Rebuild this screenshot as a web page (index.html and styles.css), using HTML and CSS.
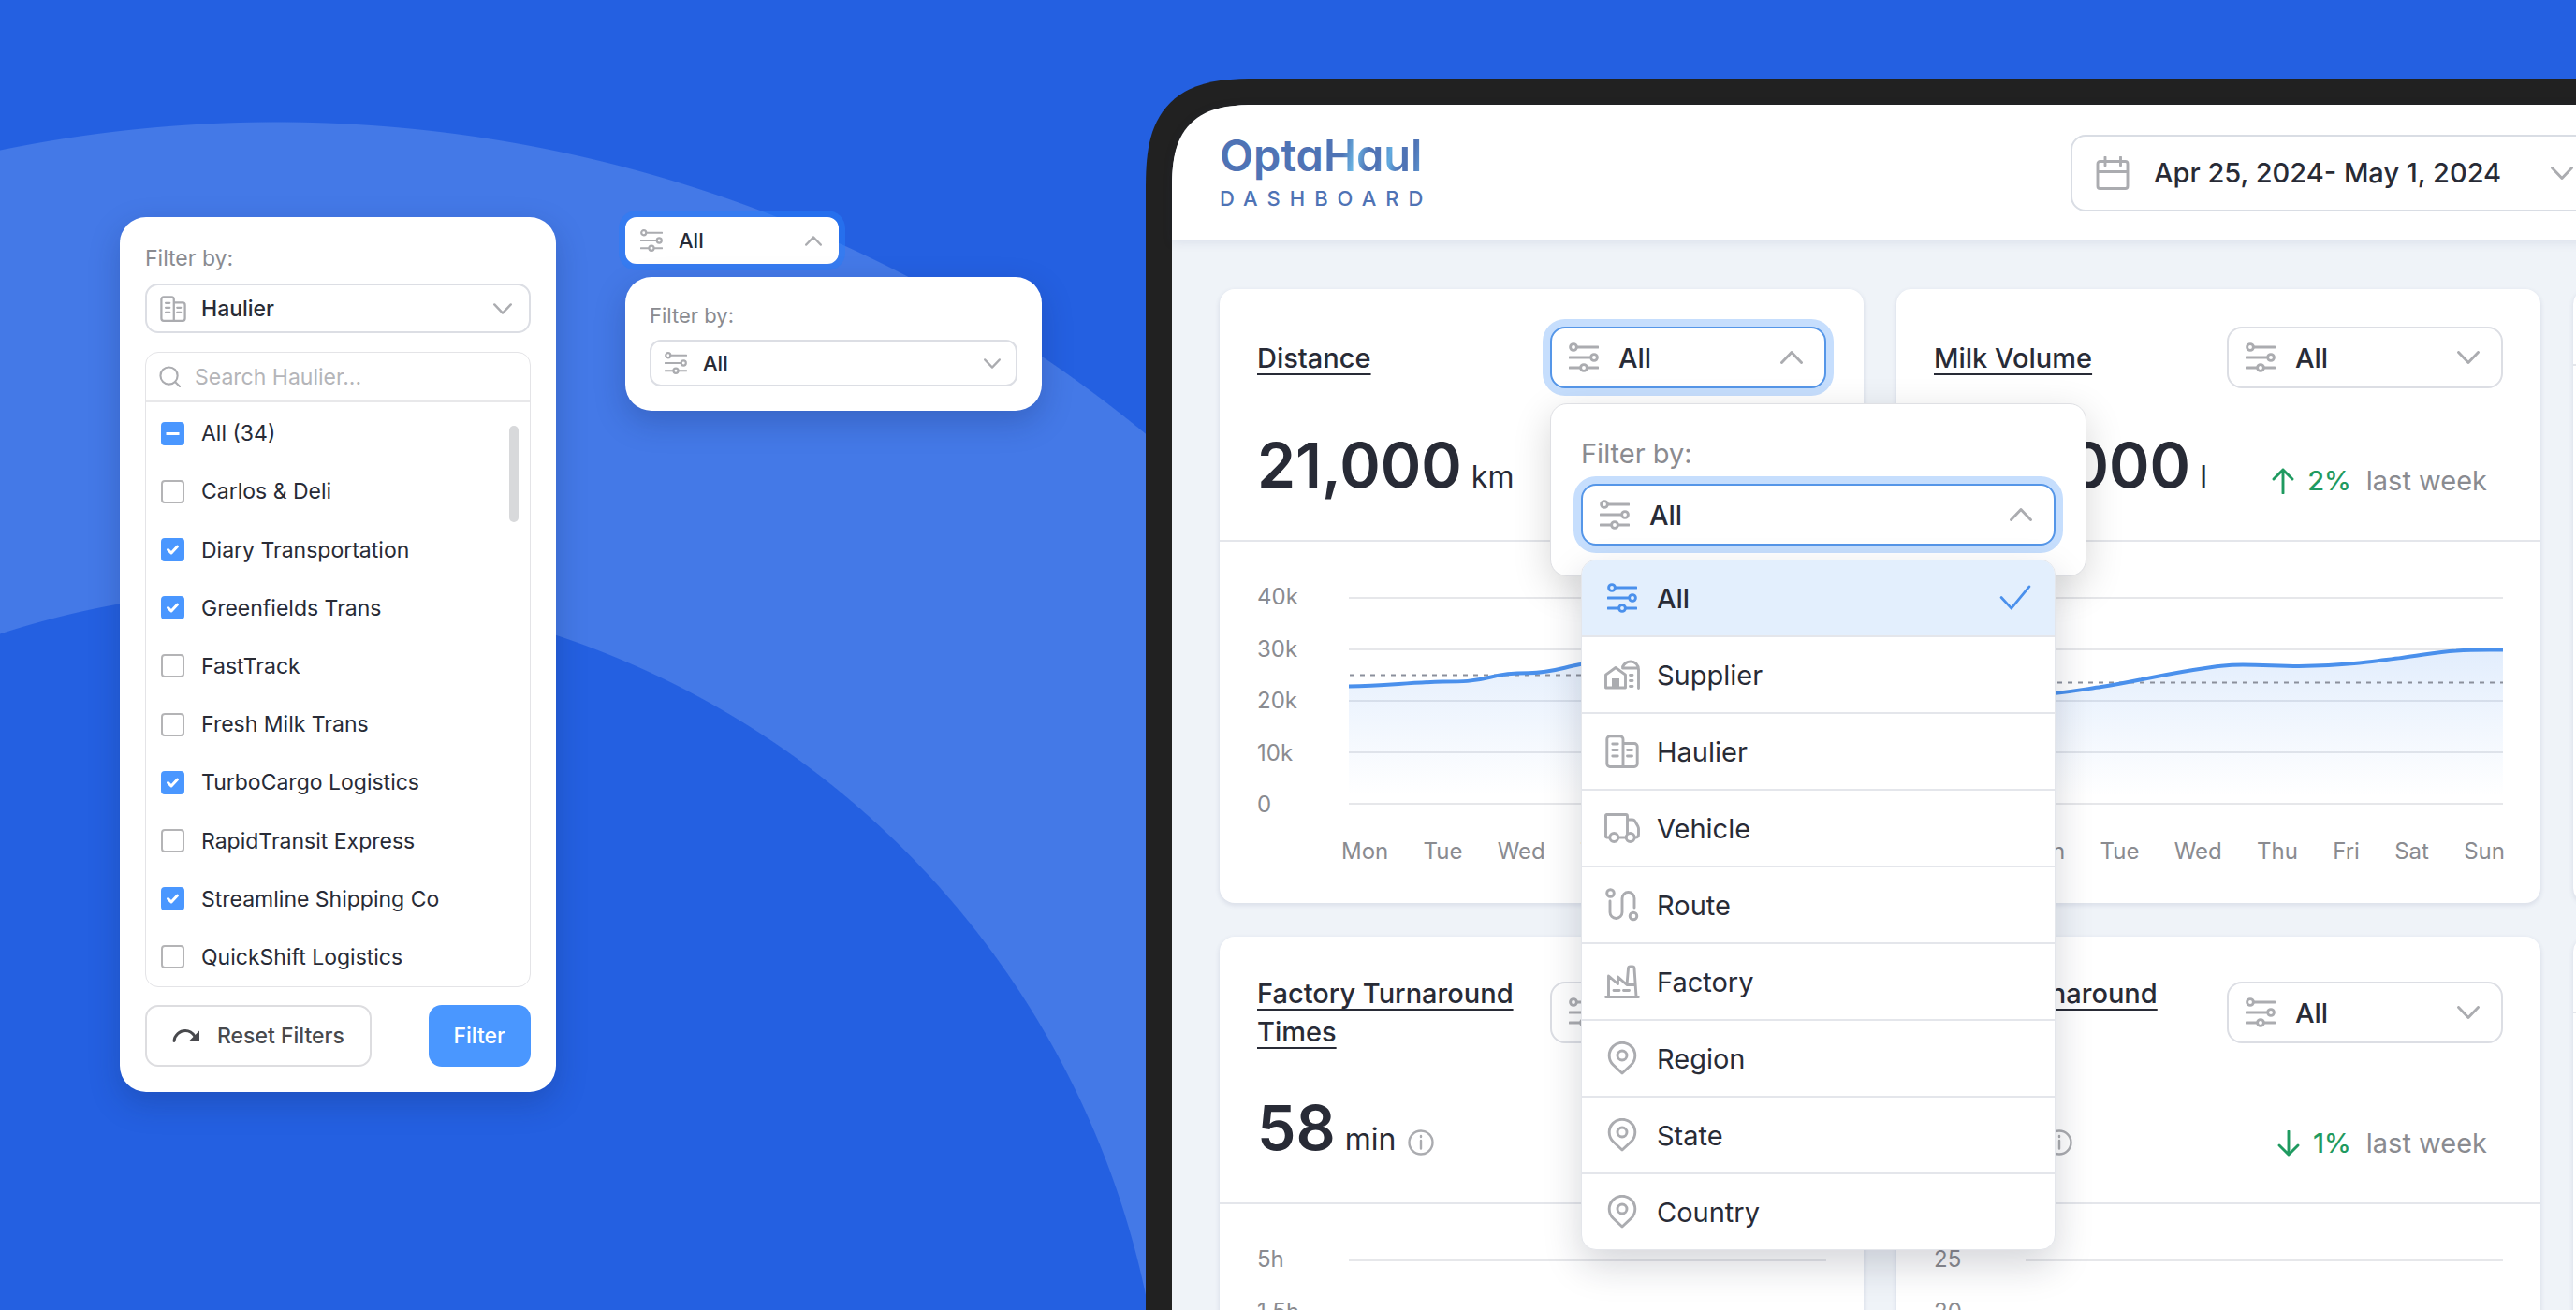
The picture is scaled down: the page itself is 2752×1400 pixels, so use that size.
FILE: index.html
```html
<!DOCTYPE html>
<html lang="en">
<head>
<meta charset="utf-8">
<title>OptaHaul Dashboard</title>
<meta name="viewport" content="width=device-width, initial-scale=1">
<link rel="stylesheet" href="styles.css">
</head>
<body>
<svg class="sprite" aria-hidden="true">
  <symbol id="i-sliders" viewBox="0 0 32 32"><path d="M9 5h22M1 16h21M1 27h11M20 27h11"/><circle cx="5" cy="5" r="3.4"/><circle cx="27" cy="16" r="3.4"/><circle cx="16" cy="27" r="3.4"/></symbol>
  <symbol id="i-building" viewBox="0 0 36 36"><path d="M19 34.5H5a3.2 3.2 0 0 1-3.2-3.2V5A3.200 3.200 0 0 1 5 1.800h10.800A3.200 3.200 0 0 1 19 5zM19 9.500h12a3.200 3.200 0 0 1 3.200 3.200v18.600a3.200 3.200 0 0 1-3.200 3.200H19M7.800 10h5.400M7.800 16.500h5.400M7.800 23h5.400M23.500 16.500h5M23.500 23h5"/></symbol>
  <symbol id="i-farm" viewBox="0 0 38 32"><path d="M1.500 30V16.200L12 8.500l10.500 7.700V30zM19.500 7.500C21.500 3.800 24.500 2 28 2c5 0 8.500 3.600 8.500 8.500V30.500M19.500 9H36M27.500 16.500h2.500M27.500 22.500h2.500M27.500 28.500h2.500"/><path class="solid" d="M8 20h8v10H8z"/></symbol>
  <symbol id="i-truck" viewBox="0 0 38 32"><path d="M5.500 26H2.500a1 1 0 0 1-1-1V2.500a1 1 0 0 1 1-1H23a1.500 1.500 0 0 1 1.500 1.500V22M15 26h8M24.500 7H30c1.200 0 2 .5 2.600 1.500l3.300 5.800c.4.800.6 1.500.6 2.400v6c0 2-1 3.300-3.500 3.300"/><circle cx="10.300" cy="26" r="4.500"/><circle cx="27.700" cy="26" r="4.500"/></symbol>
  <symbol id="i-route" viewBox="0 0 36 36"><circle cx="5.500" cy="5.500" r="3.800"/><circle cx="30" cy="30" r="3.800"/><path d="M5 14v12a6.500 6.500 0 0 0 13 0V11a6.500 6.500 0 0 1 13 0v10"/></symbol>
  <symbol id="i-factory" viewBox="0 0 38 36"><path d="M1.500 34.500h35M4.500 34V12l10 8.500V13l9.500 8.500L25.500 4q.2-2 2-2h2.500q1.800 0 2 2L34 34M24 21.500h9M10 27.500h6M20.500 27.500h6"/></symbol>
  <symbol id="i-pin" viewBox="0 0 32 36"><path d="M16 34 6.400 25A13.800 13.800 0 1 1 25.600 25z"/><circle cx="16" cy="15" r="5"/></symbol>
  <symbol id="i-calendar" viewBox="0 0 36 36"><path d="M4.500 5.500h27a2.500 2.500 0 0 1 2.500 2.500v24a2.500 2.500 0 0 1-2.500 2.500h-27A2.500 2.500 0 0 1 2 32V8a2.500 2.500 0 0 1 2.500-2.500zM2 16.500h32M10 1v9M26.500 1v9"/></symbol>
  <symbol id="i-down" viewBox="0 0 24 14"><path d="M1.500 1.500 12 12.500l10.500-11"/></symbol>
  <symbol id="i-up" viewBox="0 0 24 14"><path d="M1.500 12.500 12 1.500l10.500 11"/></symbol>
  <symbol id="i-check" viewBox="0 0 36 30"><path d="M2 14.500 13.500 27 34 2"/></symbol>
  <symbol id="i-search" viewBox="0 0 24 24"><circle cx="11" cy="11" r="9.500"/><path d="m18 18 5 5"/></symbol>
  <symbol id="i-redo" viewBox="0 0 30 16"><path d="M2 13.500C2.500 7 8 2.500 14 2.500c4 0 7.500 2 10 6"/><path class="solid" d="M29 2.500v11H18z"/></symbol>
  <symbol id="i-info" viewBox="0 0 28 28"><circle cx="14" cy="14" r="12.500"/><path d="M14 12v8.500M14 7v1"/></symbol>
  <symbol id="i-arrow" viewBox="0 0 24 28"><path d="M12 27V2M2 12 12 2l10 10"/></symbol>
</svg>

<main class="stage">
  <section class="showcase">
    <form class="panel filter-panel">
      <label class="caption" for="by-haulier">Filter by:</label>
      <div class="field field-md">
        <svg class="icon lead"><use href="#i-building"/></svg>
        <select id="by-haulier"><option>Haulier</option></select>
        <svg class="icon chevron"><use href="#i-down"/></svg>
      </div>
      <div class="picker">
        <label class="search">
          <svg class="icon"><use href="#i-search"/></svg>
          <input type="text" placeholder="Search Haulier..." aria-label="Search Haulier">
        </label>
        <div class="options">
          <div class="option-list">
            <label><input type="checkbox" class="partial" checked>All (34)</label>
            <label><input type="checkbox">Carlos &amp; Deli</label>
            <label><input type="checkbox" checked>Diary Transportation</label>
            <label><input type="checkbox" checked>Greenfields Trans</label>
            <label><input type="checkbox">FastTrack</label>
            <label><input type="checkbox">Fresh Milk Trans</label>
            <label><input type="checkbox" checked>TurboCargo Logistics</label>
            <label><input type="checkbox">RapidTransit Express</label>
            <label><input type="checkbox" checked>Streamline Shipping Co</label>
            <label><input type="checkbox">QuickShift Logistics</label>
          </div>
          <span class="scroll-thumb"></span>
        </div>
      </div>
      <div class="actions">
        <button type="reset" class="btn btn-outline"><svg class="icon"><use href="#i-redo"/></svg>Reset Filters</button>
        <button type="button" class="btn btn-primary">Filter</button>
      </div>
    </form>

    <div class="mini">
      <div class="field field-sm field-glow">
        <svg class="icon lead"><use href="#i-sliders"/></svg>
        <select aria-label="Filter"><option>All</option></select>
        <svg class="icon chevron"><use href="#i-up"/></svg>
      </div>
      <form class="panel mini-panel">
        <label class="caption" for="by-mini">Filter by:</label>
        <div class="field field-sm">
          <svg class="icon lead"><use href="#i-sliders"/></svg>
          <select id="by-mini"><option>All</option></select>
          <svg class="icon chevron"><use href="#i-down"/></svg>
        </div>
      </form>
    </div>
  </section>

  <section class="device">
    <header class="topbar">
      <div class="brand">
        <span class="brand-name">Opta<span class="brand-tail">Haul</span></span>
        <span class="brand-sub">DASHBOARD</span>
      </div>
      <button type="button" class="date">
        <svg class="icon"><use href="#i-calendar"/></svg>
        <span>Apr 25, 2024- May 1, 2024</span>
        <svg class="icon chevron"><use href="#i-down"/></svg>
      </button>
    </header>

    <div class="cards">
      <article class="card">
        <div class="card-top">
          <div class="card-head">
            <h2><a href="#distance">Distance</a></h2>
            <div class="anchor">
              <div class="field field-focus">
                <svg class="icon lead"><use href="#i-sliders"/></svg>
                <select aria-label="Distance filter"><option>All</option></select>
                <svg class="icon chevron"><use href="#i-up"/></svg>
              </div>
              <div class="popover">
                <label class="caption" for="by-open">Filter by:</label>
                <div class="anchor">
                  <div class="field field-focus">
                    <svg class="icon lead"><use href="#i-sliders"/></svg>
                    <select id="by-open"><option>All</option></select>
                    <svg class="icon chevron"><use href="#i-up"/></svg>
                  </div>
                  <ul class="menu" role="listbox" aria-label="Filter by">
                    <li role="option" aria-selected="true"><svg class="icon"><use href="#i-sliders"/></svg>All<svg class="icon tick"><use href="#i-check"/></svg></li>
                    <li role="option"><svg class="icon wide"><use href="#i-farm"/></svg>Supplier</li>
                    <li role="option"><svg class="icon tall"><use href="#i-building"/></svg>Haulier</li>
                    <li role="option"><svg class="icon wide"><use href="#i-truck"/></svg>Vehicle</li>
                    <li role="option"><svg class="icon tall"><use href="#i-route"/></svg>Route</li>
                    <li role="option"><svg class="icon wide"><use href="#i-factory"/></svg>Factory</li>
                    <li role="option"><svg class="icon tall"><use href="#i-pin"/></svg>Region</li>
                    <li role="option"><svg class="icon tall"><use href="#i-pin"/></svg>State</li>
                    <li role="option"><svg class="icon tall"><use href="#i-pin"/></svg>Country</li>
                  </ul>
                </div>
              </div>
            </div>
          </div>
          <div class="metric"><strong>21,000</strong><span>km</span></div>
        </div>
        <div class="chart">
          <div class="scale"><span>40k</span><span>30k</span><span>20k</span><span>10k</span><span>0</span></div>
          <svg class="plot" viewBox="0 0 510 222" preserveAspectRatio="none">
            <defs><linearGradient id="fade" x1="0" y1="0" x2="0" y2="1"><stop offset="0" stop-color="#4a90f0" stop-opacity=".16"/><stop offset=".95" stop-color="#4a90f0" stop-opacity="0"/></linearGradient></defs>
            <path class="grid" d="M0 1h510M0 56h510M0 111h510M0 166h510M0 221h510"/>
            <path fill="url(#fade)" d="M0 95.500C38 95.500 60 91.500 100 90.500C122 90.500 132 90.500 152 85.500C165 82 175 81.300 192 81.300C215 81 225 76.500 247 72C330 50 420 60 510 50V221H0z"/>
            <path class="average" d="M1 83.500h509"/>
            <path class="line" d="M0 95.500C38 95.500 60 91.500 100 90.500C122 90.500 132 90.500 152 85.500C165 82 175 81.300 192 81.300C215 81 225 76.500 247 72C330 50 420 60 510 50"/>
          </svg>
          <div class="days"><span>Mon</span><span>Tue</span><span>Wed</span><span>Thu</span><span>Fri</span><span>Sat</span><span>Sun</span></div>
        </div>
      </article>

      <article class="card">
        <div class="card-top">
          <div class="card-head">
            <h2><a href="#milk">Milk Volume</a></h2>
            <div class="field">
              <svg class="icon lead"><use href="#i-sliders"/></svg>
              <select aria-label="Milk volume filter"><option>All</option></select>
              <svg class="icon chevron"><use href="#i-down"/></svg>
            </div>
          </div>
          <div class="metric"><strong>250,000</strong><span>l</span>
            <p class="trend"><svg class="icon"><use href="#i-arrow"/></svg><b>2%</b>last week</p>
          </div>
        </div>
        <div class="chart">
          <div class="scale"><span>40k</span><span>30k</span><span>20k</span><span>10k</span><span>0</span></div>
          <svg class="plot" viewBox="0 0 510 222" preserveAspectRatio="none">
            <path class="grid" d="M0 1h510M0 56h510M0 111h510M0 166h510M0 221h510"/>
            <path fill="url(#fade)" d="M0 106C40 103 60 99 81 96C110 92 130 86 179 78C205 74 215 72.500 232 72.500C255 72.500 270 74 292 74C320 73.500 330 73 351 71C370 69 385 67 402 65C425 62 440 58.500 460 57.500C480 56 495 56.500 510 56.500V221H0z"/>
            <path class="average" d="M1 91.500h509"/>
            <path class="line" d="M0 106C40 103 60 99 81 96C110 92 130 86 179 78C205 74 215 72.500 232 72.500C255 72.500 270 74 292 74C320 73.500 330 73 351 71C370 69 385 67 402 65C425 62 440 58.500 460 57.500C480 56 495 56.500 510 56.500"/>
          </svg>
          <div class="days"><span>Mon</span><span>Tue</span><span>Wed</span><span>Thu</span><span>Fri</span><span>Sat</span><span>Sun</span></div>
        </div>
      </article>

      <article class="card"><div class="card-top"></div></article>

      <article class="card">
        <div class="card-top">
          <div class="card-head">
            <h2><a href="#factory">Factory Turnaround Times</a></h2>
            <div class="field">
              <svg class="icon lead"><use href="#i-sliders"/></svg>
              <select aria-label="Factory filter"><option>All</option></select>
              <svg class="icon chevron"><use href="#i-down"/></svg>
            </div>
          </div>
          <div class="metric"><strong>58</strong><span>min</span><svg class="icon info"><use href="#i-info"/></svg></div>
        </div>
        <div class="chart">
          <div class="scale"><span>5h</span><span>1.5h</span><span>1h</span><span>0.5h</span><span>0</span></div>
          <svg class="plot" viewBox="0 0 510 222" preserveAspectRatio="none"><path class="grid" d="M0 1h510M0 56h510M0 111h510M0 166h510M0 221h510"/></svg>
        </div>
      </article>

      <article class="card">
        <div class="card-top">
          <div class="card-head">
            <h2><a href="#farm">Farm Turnaround Times</a></h2>
            <div class="field">
              <svg class="icon lead"><use href="#i-sliders"/></svg>
              <select aria-label="Farm filter"><option>All</option></select>
              <svg class="icon chevron"><use href="#i-down"/></svg>
            </div>
          </div>
          <div class="metric"><strong>9</strong><span>min</span><svg class="icon info"><use href="#i-info"/></svg>
            <p class="trend"><svg class="icon flip"><use href="#i-arrow"/></svg><b>1%</b>last week</p>
          </div>
        </div>
        <div class="chart">
          <div class="scale"><span>25</span><span>20</span><span>15</span><span>10</span><span>0</span></div>
          <svg class="plot" viewBox="0 0 510 222" preserveAspectRatio="none"><path class="grid" d="M0 1h510M0 56h510M0 111h510M0 166h510M0 221h510"/></svg>
        </div>
      </article>

      <article class="card"><div class="card-top"></div></article>
    </div>
  </section>
</main>
</body>
</html>
```
FILE: styles.css
```css
:root {
  --blue: #2460e1;
  --ring: #4479e7;
  --accent: #4a97ff;
  --ink: #282b36;
  --muted: #8a8b90;
  --icon: #abacb0;
  --line: #e4e6eb;
}

* { box-sizing: border-box; }

body {
  margin: 0;
  font-family: Inter, "Liberation Sans", sans-serif;
  font-size: 29px;
  color: var(--ink);
}

h2, p, ul { margin: 0; padding: 0; }

button, input, select { font: inherit; color: inherit; }

.sprite { display: none; }

.icon {
  flex: none;
  width: 32px;
  height: 32px;
  fill: none;
  stroke: var(--icon);
  stroke-width: 2.9;
  stroke-linecap: round;
  stroke-linejoin: round;
}

.solid { fill: var(--icon); stroke: none; }

.stage {
  display: flex;
  height: 100vh;
  overflow: hidden;
  background:
    radial-gradient(circle at 295px 1580px, var(--blue) 949px, transparent 950px),
    radial-gradient(circle at 295px 1592px, var(--ring) 1461px, var(--blue) 1462px);
}

/* Left side: stand-alone filter components */
.showcase {
  flex: 0 0 1224px;
  display: flex;
  align-items: flex-start;
  gap: 74px;
  padding: 232px 0 0 128px;
}

.panel {
  display: flex;
  flex-direction: column;
  background: #fff;
  border-radius: 28px;
  box-shadow: 0 12px 32px rgba(20, 40, 90, .25);
}

.filter-panel { width: 466px; padding: 27px; font-size: 23px; }

.caption { color: var(--muted); }
.filter-panel .caption { line-height: 34px; margin-bottom: 10px; }

.field { flex: none; display: grid; align-items: center; width: 295px; }
.field > * { grid-area: 1 / 1; }
.field > svg { pointer-events: none; z-index: 1; }
.field .lead { margin-left: 20px; }
.field .chevron { justify-self: end; margin-right: 25px; }

.chevron { width: 24px; height: 14px; }

.field select {
  appearance: none;
  width: 100%;
  height: 66px;
  padding: 0 60px 0 71px;
  border: 2px solid #dcdee4;
  border-radius: 16px;
  background: #fff;
  font-weight: 500;
}

.field-focus select { border-color: #5596e8; box-shadow: 0 0 0 8px #c6defd; }

.field-md { width: 100%; }
.field-md select { height: 53px; padding-left: 58px; border-radius: 14px; }
.field-md .lead { width: 28px; height: 28px; margin-left: 16px; }
.field-md .chevron { width: 20px; height: 12px; margin-right: 20px; }

.field-sm { width: 100%; }
.field-sm select { height: 50px; padding-left: 55px; border-radius: 12px; }
.field-sm .lead { width: 24px; height: 24px; margin-left: 16px; }
.field-sm .chevron { width: 18px; height: 11px; margin-right: 18px; }

.picker {
  margin-top: 20px;
  border: 1px solid #e4e4e7;
  border-radius: 14px;
}

.search {
  display: flex;
  align-items: center;
  gap: 15px;
  height: 53px;
  padding: 0 14px;
  border-bottom: 2px solid #e8e8ea;
}
.search .icon { width: 23px; height: 23px; stroke-width: 2.2; }
.search input { flex: 1; min-width: 0; padding: 0; border: 0; outline: 0; background: none; }
.search input::placeholder { color: #b4b5b9; }

.options { display: flex; height: 624px; padding-right: 12px; }
.option-list { flex: 1; display: flex; flex-direction: column; padding-top: 2px; }
.option-list label { flex: 1; display: flex; align-items: center; gap: 18px; padding-left: 16px; }
.option-list input {
  appearance: none;
  width: 25px;
  height: 25px;
  margin: 0;
  border: 2px solid #b4b4b6;
  border-radius: 4px;
}
.option-list input:checked {
  border-color: var(--accent);
  background: var(--accent) center / 21px url("data:image/svg+xml,%3Csvg xmlns='http://www.w3.org/2000/svg' viewBox='0 0 21 21' fill='none' stroke='white' stroke-width='3' stroke-linecap='round' stroke-linejoin='round'%3E%3Cpath d='m5.500 10.500 3.500 3.500 6.500-7'/%3E%3C/svg%3E");
}
.option-list input.partial {
  background-image: url("data:image/svg+xml,%3Csvg xmlns='http://www.w3.org/2000/svg' viewBox='0 0 21 21' stroke='white' stroke-width='3'%3E%3Cpath d='M3.500 10.500h14'/%3E%3C/svg%3E");
}
.scroll-thumb { width: 10px; height: 103px; margin-top: 25px; border-radius: 5px; background: #d8d9db; }

.actions { display: flex; justify-content: space-between; margin-top: 19px; }
.btn {
  display: flex;
  align-items: center;
  gap: 18px;
  height: 66px;
  padding: 0 27px;
  border: 0;
  border-radius: 14px;
  font-weight: 500;
}
.btn-outline { --icon: #48494d; border: 2px solid #dddde0; background: #fff; color: #48494d; }
.btn-outline .icon { width: 30px; height: 16px; }
.btn-primary { background: var(--accent); color: #fff; }

.mini { display: flex; flex-direction: column; gap: 14px; font-size: 22px; }
.mini-panel { width: 445px; padding: 26px; }
.mini-panel .caption { line-height: 30px; margin-bottom: 11px; }
.field-glow { width: 228px; }
.field-glow select { border-color: #fff; box-shadow: 0 0 0 7px rgba(40, 125, 250, .5); }

/* Right side: dashboard running off the right and bottom edges */
.device {
  flex: 1 0 auto;
  align-self: flex-start;
  width: calc(100% - 460px);
  margin-top: 84px;
  border: 28px solid #212121;
  border-radius: 92px;
  background: #eff3f8;
}

.topbar {
  display: flex;
  align-items: center;
  justify-content: space-between;
  height: 145px;
  padding: 0 714px 0 51px;
  background: #fff;
  border-radius: 64px 64px 0 0;
  box-shadow: 0 2px 12px rgba(40, 60, 120, .1);
}

@supports (corner-shape: superellipse(1.5)) {
  .device { border-radius: 120px; corner-shape: superellipse(1.5); }
  .topbar { border-radius: 92px 92px 0 0; corner-shape: superellipse(1.5); }
}

.brand { display: flex; flex-direction: column; gap: 4px; color: #4f73b5; }
.brand-name {
  font-size: 47px;
  font-weight: 600;
  line-height: 50px;
  font-feature-settings: "cv11";
}
.brand-tail {
  background: linear-gradient(100deg, #4f73b5 22%, #6cb9e6 34%, #4f73b5 46%, #4f73b5 56%, #63ace0 66%, #4f73b5 76%, #4f73b5 88%, #5b93cf 96%);
  background-clip: text;
  color: transparent;
}
.brand-sub { font-size: 22px; font-weight: 500; letter-spacing: 10px; line-height: 34px; }

.date {
  display: flex;
  align-items: center;
  gap: 26px;
  width: 562px;
  height: 82px;
  padding: 0 23px 0 25px;
  border: 2px solid #d9dde4;
  border-radius: 16px;
  background: #fff;
  font-weight: 500;
}
.date .icon:first-child { width: 36px; height: 36px; }
.date .chevron { margin-left: auto; }

.cards {
  display: grid;
  grid-template-columns: repeat(3, 1fr);
  gap: 36px 35px;
  padding: 52px 51px;
}

.card {
  background: #fff;
  border-radius: 16px;
  box-shadow: 0 2px 4px 1px rgba(60, 70, 120, .1);
}
.card-top { padding: 40px; border-bottom: 2px solid var(--line); }
.card-head { display: flex; align-items: center; justify-content: space-between; gap: 24px; }

h2 { font-size: 29px; font-weight: 500; line-height: 41px; }
h2 a {
  color: inherit;
  text-decoration: underline 2px;
  text-underline-offset: 6px;
  text-decoration-skip-ink: none;
}

.metric { display: flex; align-items: baseline; gap: 10px; margin-top: 42px; font-size: 32px; line-height: 40px; }
.metric strong { font-size: 66px; font-weight: 600; line-height: 80px; }
.info { width: 28px; height: 28px; align-self: center; stroke-width: 2.4; margin: 32px 0 0 3px; }

.trend {
  display: flex;
  align-self: flex-end;
  align-items: center;
  gap: 14px;
  margin: 0 17px 3px auto;
  font-size: 29px;
  color: var(--muted);
}
.trend b { font-weight: 500; color: #1f9a60; margin-right: 2px; }
.trend .icon { width: 24px; height: 28px; stroke: #1f9a60; }
.flip { rotate: 180deg; }

.chart {
  display: grid;
  grid-template-columns: 98px 1fr;
  padding: 43px 40px 39px;
  font-size: 24px;
  line-height: 32px;
  color: var(--muted);
}
.scale { display: flex; flex-direction: column; justify-content: space-between; height: 254px; }
.plot { width: 100%; height: 222px; margin-top: 16px; overflow: visible; }
.plot path { vector-effect: non-scaling-stroke; }
.grid { stroke: #e6e7ea; stroke-width: 2; }
.average { stroke: #8b909c; stroke-width: 2; stroke-dasharray: 5 6; }
.line { fill: none; stroke: #4a90ec; stroke-width: 4; }
.days { grid-column: 2; display: flex; justify-content: space-between; margin: 18px -2px 0 -8px; }

.anchor { position: relative; }
.anchor > .field { position: relative; }

.popover {
  position: absolute;
  z-index: 2;
  top: calc(100% + 16px);
  left: 0;
  width: 573px;
  padding: 32px;
  border: 1px solid #dfe0e4;
  border-radius: 18px;
  background: #fff;
  box-shadow: 0 12px 40px rgba(0, 0, 0, .16);
}
.popover .caption { display: block; line-height: 41px; margin-bottom: 12px; }
.popover .field { width: 100%; }

.menu {
  position: absolute;
  top: calc(100% + 15px);
  left: 0;
  right: 0;
  list-style: none;
  border: 1px solid var(--line);
  border-radius: 16px;
  background: #fff;
  box-shadow: 0 16px 40px rgba(20, 25, 50, .18);
}
.menu li {
  display: grid;
  grid-template-columns: 38px 1fr auto;
  align-items: center;
  gap: 18px;
  height: 82px;
  padding: 0 24px;
  border-top: 2px solid var(--line);
}
.menu li:first-child { height: 80px; border-top: 0; border-radius: 15px 15px 0 0; background: #e3effd; font-weight: 500; }
.menu .icon { justify-self: center; }
.menu .wide { width: 38px; height: 36px; }
.menu .tall { width: 36px; height: 36px; }
.menu li:first-child .icon { stroke: #4a90ec; }
.menu .tick { width: 36px; height: 28px; }
```
